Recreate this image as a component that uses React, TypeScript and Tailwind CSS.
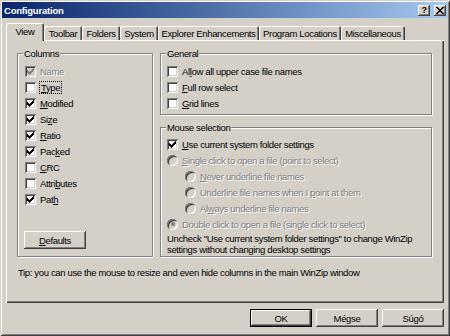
import type { ReactNode } from "react";

const CHECK_PIXELS: [number, number, number][] = [
  [6, 0, 1],
  [5, 1, 2],
  [0, 2, 1],
  [4, 2, 3],
  [0, 3, 2],
  [3, 3, 3],
  [0, 4, 5],
  [1, 5, 3],
  [2, 6, 1],
];

const CLOSE_PIXELS: [number, number, number][] = [
  [0, 0, 2],
  [6, 0, 2],
  [1, 1, 2],
  [5, 1, 2],
  [2, 2, 4],
  [3, 3, 2],
  [2, 4, 4],
  [1, 5, 2],
  [5, 5, 2],
  [0, 6, 2],
  [6, 6, 2],
];

function Pixels({ rows, w, h, color }: { rows: [number, number, number][]; w: number; h: number; color: string }) {
  return (
    <svg width={w} height={h} viewBox={`0 0 ${w} ${h}`} shapeRendering="crispEdges">
      {rows.map(([x, y, len]) => (
        <rect key={`${x}-${y}`} x={x} y={y} width={len} height={1} fill={color} />
      ))}
    </svg>
  );
}

function Key({ children }: { children: ReactNode }) {
  return <u className="underline underline-offset-[1px]">{children}</u>;
}

function CheckBox({ checked, disabled }: { checked: boolean; disabled: boolean }) {
  return (
    <span
      className={`flex h-[11px] w-[11px] shrink-0 items-center justify-center shadow-[inset_1px_1px_0_#808080,inset_-1px_-1px_0_#fff,inset_2px_2px_0_#404040,inset_-2px_-2px_0_#d4d0c8] ${
        disabled ? "bg-[#d4d0c8]" : "bg-white"
      }`}
    >
      {checked ? <Pixels rows={CHECK_PIXELS} w={7} h={7} color={disabled ? "#808080" : "#000"} /> : null}
    </span>
  );
}

function Radio({ selected = false }: { selected?: boolean }) {
  return (
    <span className="flex h-[11px] w-[11px] shrink-0 items-center justify-center rounded-full bg-[#d4d0c8] shadow-[inset_1px_1px_0_#808080,inset_-1px_-1px_0_#fff,inset_2px_2px_0_#404040,inset_-2px_-2px_0_#d4d0c8]">
      {selected ? <span className="h-[4px] w-[4px] rounded-full bg-[#808080]" /> : null}
    </span>
  );
}

const disabledText = "text-[#808080] [text-shadow:1px_1px_0_#fff]";

function CheckRow({
  checked = false,
  disabled = false,
  focus = false,
  children,
}: {
  checked?: boolean;
  disabled?: boolean;
  focus?: boolean;
  children: ReactNode;
}) {
  return (
    <div className="flex h-[16px] items-center gap-[4px]">
      <CheckBox checked={checked} disabled={disabled} />
      <span
        className={`whitespace-nowrap ${disabled ? disabledText : ""} ${focus ? "px-[1px] [outline:1px_dotted_#000]" : ""}`}
      >
        {children}
      </span>
    </div>
  );
}

function RadioRow({ selected = false, children }: { selected?: boolean; children: ReactNode }) {
  return (
    <div className="flex h-[16px] items-center gap-[4px]">
      <Radio selected={selected} />
      <span className={`whitespace-nowrap ${disabledText}`}>{children}</span>
    </div>
  );
}

function Group({ title, className, children }: { title: string; className: string; children: ReactNode }) {
  return (
    <div className={`border border-[#808080] shadow-[1px_1px_0_#fff,inset_1px_1px_0_#fff] ${className}`}>
      <div className="-mt-[6px] ml-[5px] w-fit bg-[#d4d0c8] px-[1px] leading-[11px]">{title}</div>
      {children}
    </div>
  );
}

function Button({ label, isDefault = false, className = "" }: { label: ReactNode; isDefault?: boolean; className?: string }) {
  return (
    <button
      type="button"
      className={`flex h-[18px] w-[62px] items-center justify-center bg-[#d4d0c8] shadow-[inset_-1px_-1px_0_#404040,inset_1px_1px_0_#fff,inset_-2px_-2px_0_#808080] ${
        isDefault ? "border border-black" : ""
      } ${className}`}
    >
      {label}
    </button>
  );
}

const TABS = [
  { label: "View", width: "w-[38px]" },
  { label: "Toolbar", width: "w-[38px]" },
  { label: "Folders", width: "w-[38px]" },
  { label: "System", width: "w-[38px]" },
  { label: "Explorer Enhancements", width: "w-[101px]" },
  { label: "Program Locations", width: "w-[82px]" },
  { label: "Miscellaneous", width: "w-[64px]" },
];

function TitleBar() {
  return (
    <div className="flex h-[16px] items-center justify-between bg-linear-to-r from-[#0a246a] to-[#a6caf0] pl-[2px] pr-[2px]">
      <span className="font-bold tracking-[-0.2px] text-white">Configuration</span>
      <div className="flex gap-[4px]">
        <span className="flex h-[11px] w-[12px] items-center justify-center bg-[#d4d0c8] pt-[1px] text-[9px] font-bold leading-[9px] shadow-[inset_-1px_-1px_0_#404040,inset_1px_1px_0_#fff,inset_-2px_-2px_0_#808080]">
          ?
        </span>
        <span className="flex h-[11px] w-[12px] items-center justify-center bg-[#d4d0c8] shadow-[inset_-1px_-1px_0_#404040,inset_1px_1px_0_#fff,inset_-2px_-2px_0_#808080]">
          <Pixels rows={CLOSE_PIXELS} w={8} h={7} color="#000" />
        </span>
      </div>
    </div>
  );
}

export default function App() {
  return (
    <div className="h-[336px] w-[450px] overflow-hidden bg-[#d4d0c8] p-[2px] font-['Liberation_Sans',Arial,sans-serif] text-[9.5px] leading-[11px] tracking-[-0.35px] text-black shadow-[inset_1px_1px_0_#d4d0c8,inset_-1px_-1px_0_#404040,inset_2px_2px_0_#fff,inset_-2px_-2px_0_#808080]">
      <TitleBar />
      <div className="px-[4px]">
        {/* tab strip */}
        <div className="mt-[5px] flex h-[17px] items-end">
          {TABS.map((tab, i) => (
            <div
              key={tab.label}
              className={`flex items-center justify-center rounded-t-[2px] bg-[#d4d0c8] whitespace-nowrap shadow-[inset_1px_1px_0_#fff,inset_-1px_0_0_#404040,inset_-2px_0_0_#808080] ${tab.width} ${
                i === 0 ? "relative z-10 -mb-px h-[18px] pb-[2px]" : "h-[14px]"
              }`}
            >
              {tab.label}
            </div>
          ))}
        </div>

        {/* tab page */}
        <div className="h-[263px] w-[438px] pl-[11px] pt-[13px] shadow-[inset_1px_1px_0_#fff,inset_-1px_-1px_0_#404040,inset_-2px_-2px_0_#808080]">
          <div className="flex">
            <Group title="Columns" className="h-[204px] w-[136px]">
              <div className="pl-[7px] pt-[4px]">
                <CheckRow checked disabled>
                  Name
                </CheckRow>
                <CheckRow focus>
                  <Key>T</Key>ype
                </CheckRow>
                <CheckRow checked>
                  <Key>M</Key>odified
                </CheckRow>
                <CheckRow checked>
                  Si<Key>z</Key>e
                </CheckRow>
                <CheckRow checked>
                  <Key>R</Key>atio
                </CheckRow>
                <CheckRow checked>
                  Pac<Key>k</Key>ed
                </CheckRow>
                <CheckRow>
                  <Key>C</Key>RC
                </CheckRow>
                <CheckRow>
                  Attri<Key>b</Key>utes
                </CheckRow>
                <CheckRow checked>
                  Pat<Key>h</Key>
                </CheckRow>
                <Button label={<><Key>D</Key>efaults</>} className="-ml-[1px] mt-[24px]" />
              </div>
            </Group>

            <div className="ml-[7px] w-[272px]">
              <Group title="General" className="h-[62px] w-full">
                <div className="pl-[6px] pt-[4px]">
                  <CheckRow>
                    Al<Key>l</Key>ow all upper case file names
                  </CheckRow>
                  <CheckRow>
                    <Key>F</Key>ull row select
                  </CheckRow>
                  <CheckRow>
                    <Key>G</Key>rid lines
                  </CheckRow>
                </div>
              </Group>

              <Group title="Mouse selection" className="mt-[12px] h-[130px] w-full">
                <div className="pl-[6px] pt-[3px]">
                  <CheckRow checked>
                    <Key>U</Key>se current system folder settings
                  </CheckRow>
                  <RadioRow>
                    <Key>S</Key>ingle click to open a file (point to select)
                  </RadioRow>
                  <div className="pl-[18px]">
                    <RadioRow>
                      <Key>N</Key>ever underline file names
                    </RadioRow>
                    <RadioRow>
                      Underline file names when I <Key>p</Key>oint at them
                    </RadioRow>
                    <RadioRow>
                      Al<Key>w</Key>ays underline file names
                    </RadioRow>
                  </div>
                  <RadioRow selected>
                    Doub<Key>l</Key>e click to open a file (single click to select)
                  </RadioRow>
                  <p className="pt-[1px]">
                    Uncheck "Use current system folder settings" to change WinZip
                    <br />
                    settings without changing desktop settings
                  </p>
                </div>
              </Group>
            </div>
          </div>
          <p className="ml-[1px] mt-[10px] whitespace-nowrap">
            Tip: you can use the mouse to resize and even hide columns in the main WinZip window
          </p>
        </div>

        {/* dialog buttons */}
        <div className="mt-[6px] flex justify-end gap-[4px]">
          <Button label="OK" isDefault />
          <Button label="Mégse" />
          <Button label="Súgó" />
        </div>
      </div>
    </div>
  );
}
